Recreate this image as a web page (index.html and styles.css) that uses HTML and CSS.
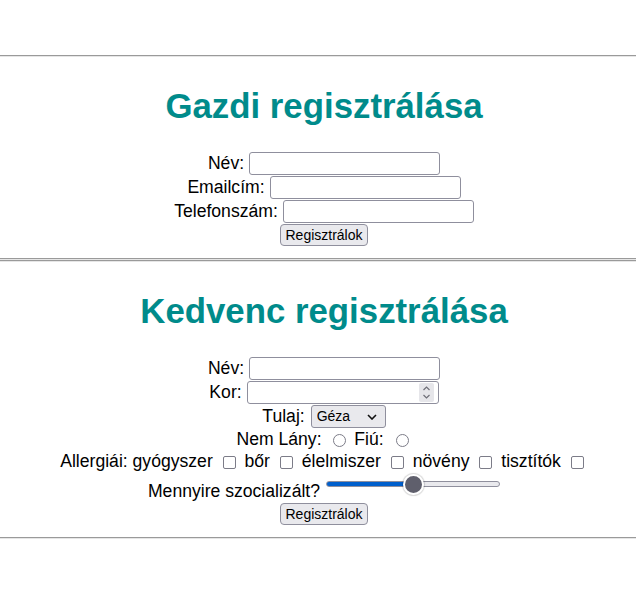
FILE: index.html
```html
<!DOCTYPE html>
<html lang="hu">
<head>
<meta charset="utf-8">
<title>Regisztráció</title>
<link rel="stylesheet" href="styles.css">
</head>
<body>
<div class="topspace"></div>
<hr class="rule">
<section class="block">
  <h1 class="title">Gazdi regisztrálása</h1>
  <form class="form">
    <div class="row"><label for="gnev">Név:</label><input id="gnev" type="text" class="field"></div>
    <div class="row"><label for="gmail">Emailcím:</label><input id="gmail" type="email" class="field"></div>
    <div class="row"><label for="gtel">Telefonszám:</label><input id="gtel" type="tel" class="field"></div>
    <div class="row"><button type="button" class="btn">Regisztrálok</button></div>
  </form>
</section>
<hr class="rule"><hr class="rule">
<section class="block">
  <h1 class="title">Kedvenc regisztrálása</h1>
  <form class="form">
    <div class="row"><label for="knev">Név:</label><input id="knev" type="text" class="field"></div>
    <div class="row"><label for="kkor">Kor:</label><span class="numwrap"><input id="kkor" type="number" class="field field-num"><svg class="spin" width="15" height="19" viewBox="0 0 15 19" aria-hidden="true"><rect width="15" height="19" rx="2" fill="#e6e6ea"/><path d="M4.5 7 L7.5 4 L10.5 7" fill="none" stroke="#6f6f78" stroke-width="1.2"/><path d="M4.5 12 L7.5 15 L10.5 12" fill="none" stroke="#6f6f78" stroke-width="1.2"/></svg></span></div>
    <div class="row"><label for="ktul">Tulaj:</label><span class="selwrap"><select id="ktul" class="sel"><option>Géza</option><option>Anna</option></select><svg class="chev" width="10" height="6" viewBox="0 0 10 6" aria-hidden="true"><path d="M1 1 L5 5 L9 1" fill="none" stroke="#111" stroke-width="1.6"/></svg></span></div>
    <div class="line">Nem Lány: <input type="radio" name="nem" class="radio"> Fiú: <input type="radio" name="nem" class="radio"></div>
    <div class="line">Allergiái: gyógyszer <input type="checkbox" class="check"> bőr <input type="checkbox" class="check"> élelmiszer <input type="checkbox" class="check"> növény <input type="checkbox" class="check"> tisztítók <input type="checkbox" class="check"></div>
    <div class="row row-range"><label for="kszoc" class="range-label">Mennyire szocializált?</label><input id="kszoc" type="range" class="range" min="0" max="100" value="50"></div>
    <div class="row"><button type="button" class="btn">Regisztrálok</button></div>
  </form>
</section>
<hr class="rule">
</body>
</html>
```
FILE: styles.css
```css
* { box-sizing: border-box; }
html, body { margin: 0; padding: 0; background: #fff; }
body {
  font-family: "Liberation Sans", Arial, sans-serif;
  font-size: 17.6px;
  color: #000;
}
.topspace { height: 55px; }
.rule {
  margin: 0;
  height: 2px;
  border: 0;
  border-top: 1px solid #9a9a9a;
  border-bottom: 1px solid #e6e6e6;
}
.block {
  padding: 29px 0 11px 12px;
}
.title {
  margin: 0 0 25px;
  text-align: center;
  color: #008b8b;
  font-size: 34.8px;
  line-height: 40px;
  font-weight: bold;
}
.row {
  display: flex;
  justify-content: center;
  align-items: center;
  gap: 5px;
  height: 24px;
}
.field {
  width: 191px;
  height: 23px;
  margin: 0;
  padding: 1px 3px;
  border: 1px solid #8f8f9d;
  border-radius: 3px;
  background: #fff;
  font-family: "Liberation Sans", Arial, sans-serif;
  font-size: 13.33px;
}
.numwrap, .selwrap { position: relative; display: inline-flex; }
.field-num { width: 192px; -moz-appearance: textfield; }
.field-num::-webkit-inner-spin-button,
.field-num::-webkit-outer-spin-button { -webkit-appearance: none; margin: 0; }
.spin { position: absolute; right: 5px; top: 2px; pointer-events: none; }
.sel {
  -webkit-appearance: none;
  appearance: none;
  width: 75px;
  height: 23px;
  margin: 0 0 0 1px;
  padding: 0 0 0 5px;
  border: 1px solid #8f8f9d;
  border-radius: 3px;
  background: #e9e9ed;
  color: #000;
  font-family: "Liberation Sans", Arial, sans-serif;
  font-size: 14px;
}
.chev { position: absolute; right: 9px; top: 9px; pointer-events: none; }
.btn {
  margin: 0;
  padding: 0 4px;
  height: 22px;
  border: 1px solid #8f8f9d;
  border-radius: 4px;
  background: #e9e9ed;
  color: #000;
  font-family: "Liberation Sans", Arial, sans-serif;
  font-size: 14px;
}
.line {
  text-align: center;
  white-space: nowrap;
  height: 22px;
  line-height: 22px;
}
.radio, .check {
  -webkit-appearance: none;
  appearance: none;
  width: 13px;
  height: 13px;
  background: #fff;
  border: 1.5px solid #7c7c88;
  vertical-align: -2px;
}
.radio { border-radius: 50%; margin: 0 3px 0 7px; }
.check { border-radius: 2px; margin: 0 4px 0 5px; }
.row-range {
  height: 30px;
  align-items: flex-start;
  gap: 6px;
}
.range-label { margin-top: 9px; line-height: 20px; }
.range {
  -webkit-appearance: none;
  appearance: none;
  width: 174px;
  height: 20px;
  margin: 2px 0 0;
  background: transparent;
  padding: 0;
}
.range::-webkit-slider-runnable-track {
  height: 6px;
  border-radius: 3px;
  border: 1px solid #8f8f9d;
  background: linear-gradient(to right, #005fcc 0, #005fcc 50%, #e9e9ed 50%, #e9e9ed 100%);
}
.range::-webkit-slider-thumb {
  -webkit-appearance: none;
  appearance: none;
  width: 21px;
  height: 21px;
  margin-top: -8.5px;
  border-radius: 50%;
  background: #5f5f6c;
  border: 2px solid #fff;
  box-shadow: 0 0 1px 1px rgba(0,0,0,0.15);
}
```
